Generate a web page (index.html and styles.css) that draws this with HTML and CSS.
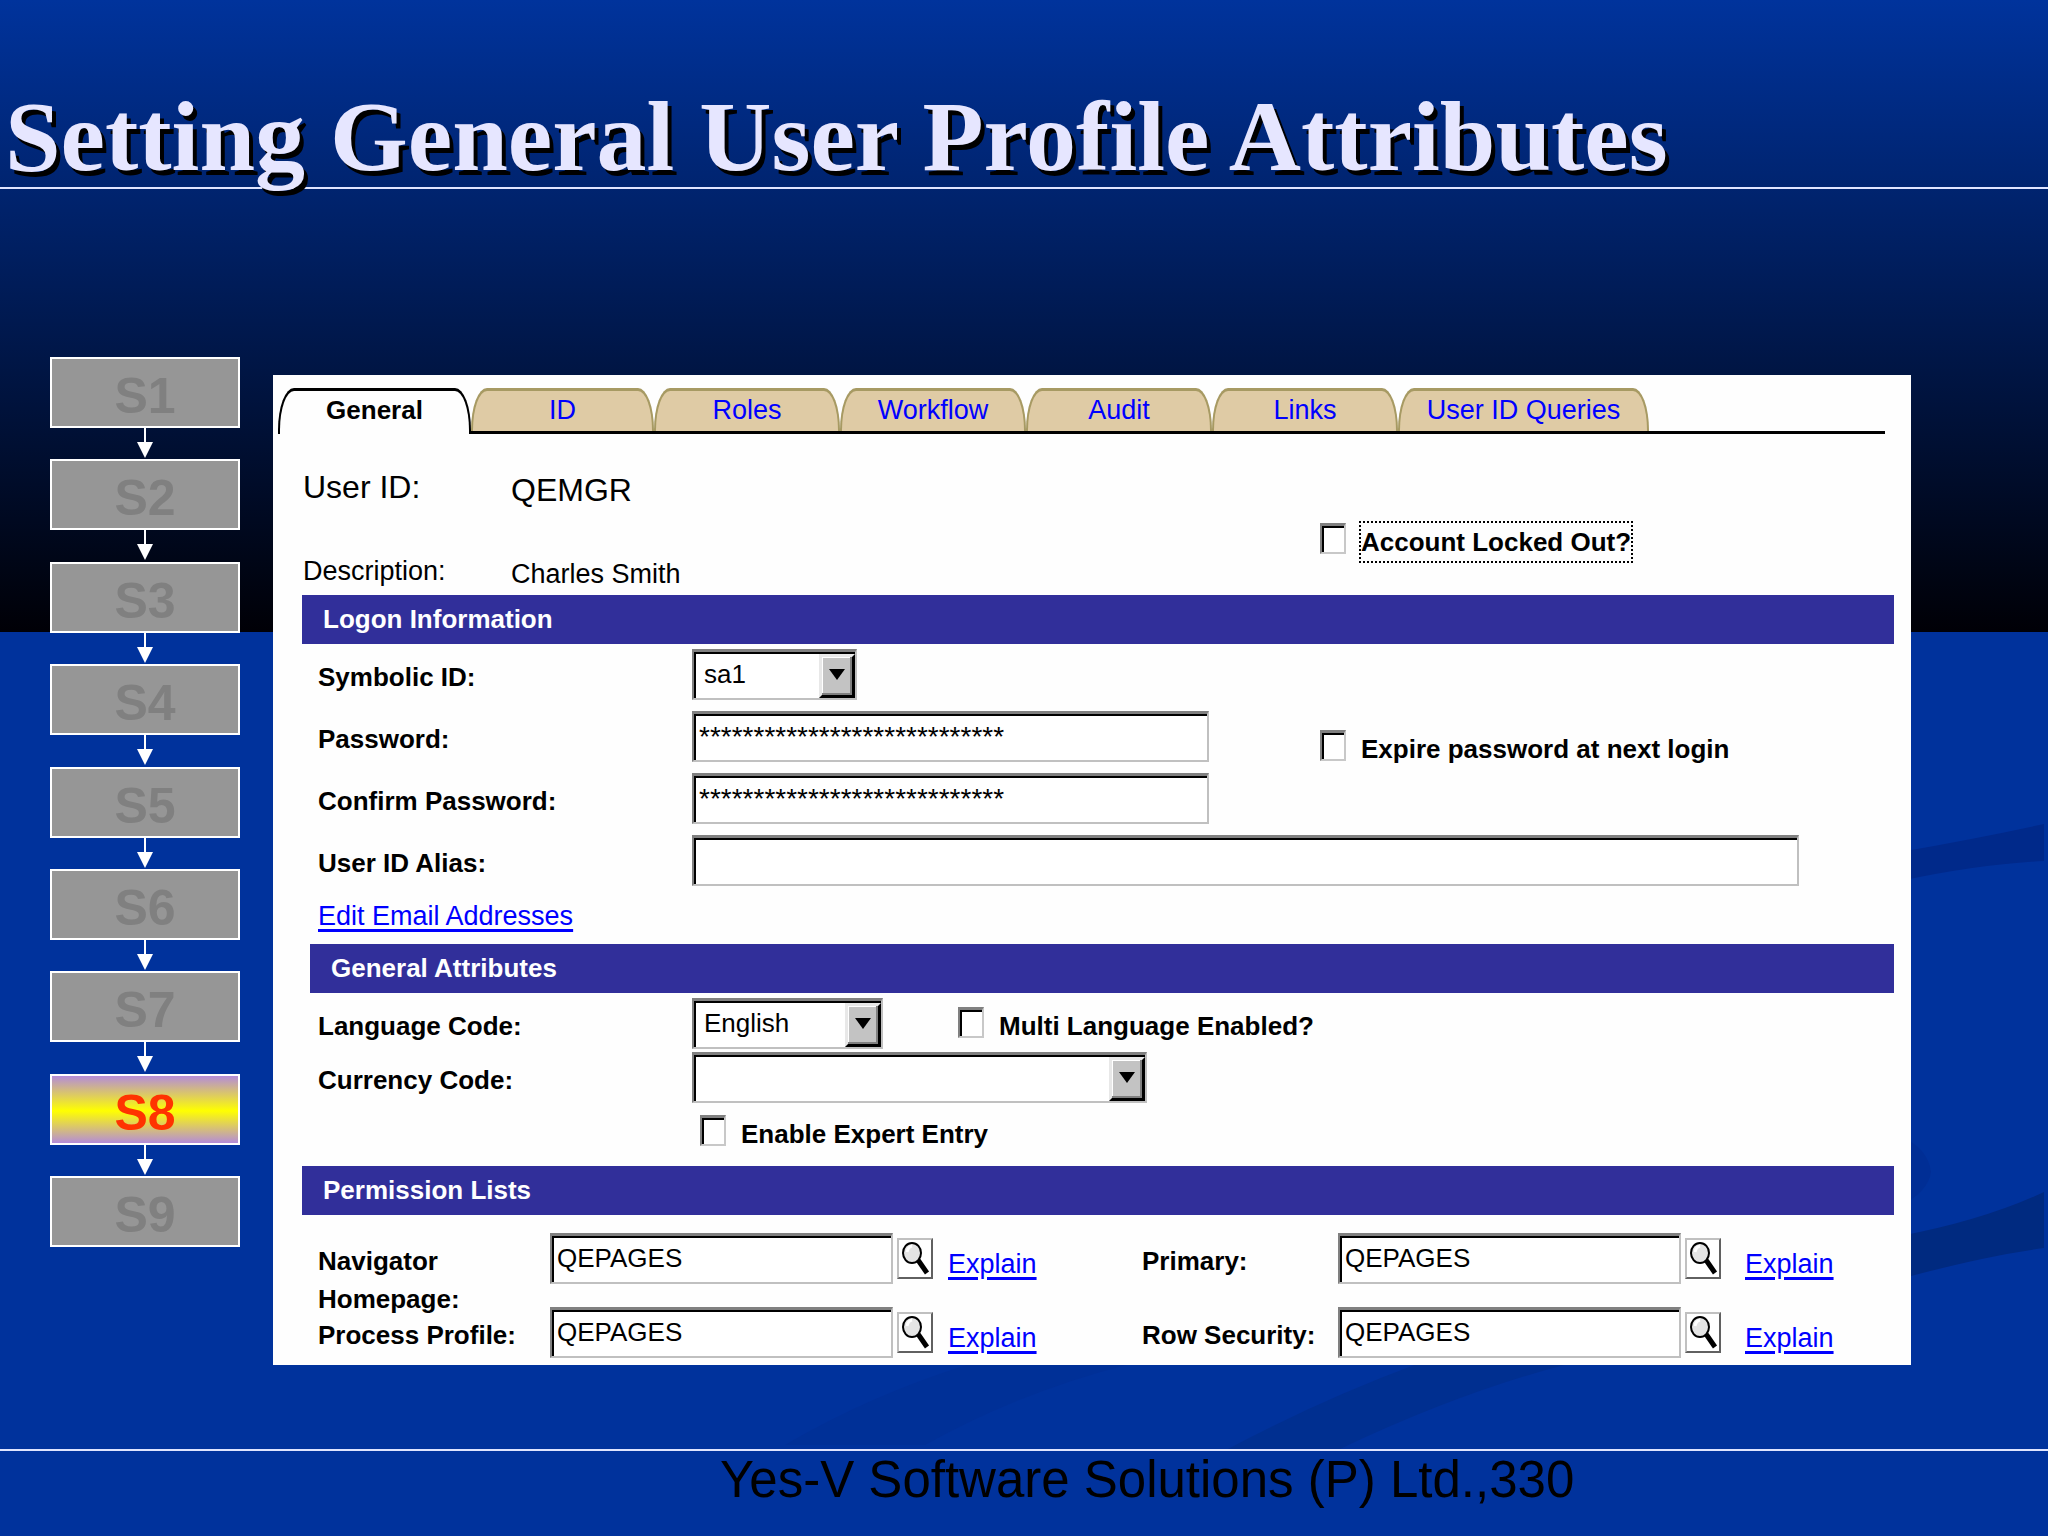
FILE: index.html
```html
<!DOCTYPE html>
<html lang="en">
<head>
<meta charset="utf-8">
<title>Setting General User Profile Attributes</title>
<link rel="stylesheet" href="styles.css">
</head>
<body>
<div class="slide">
  <svg class="swoosh" viewBox="0 0 2048 1536" preserveAspectRatio="none" aria-hidden="true">
    <path fill="#00298a" d="M1900 852Q1980 838 2044 824V861Q1980 864 1900 881Z"/>
    <path fill="#002e95" d="M1900 1136Q1928 1148 1931 1172Q1928 1192 1900 1206Z"/>
    <path fill="#002a80" d="M1900 1236Q1984 1220 2044 1192V1248Q1984 1256 1900 1279Z"/>
    <path fill="#002f90" d="M1228 1449Q1320 1400 1417 1364H1568Q1460 1392 1340 1449Z"/>
    <path fill="#003097" d="M785 1445Q870 1395 970 1364H1130Q1020 1392 925 1445Z"/>
  </svg>

  <header class="title-bar"><h1>Setting General User Profile Attributes</h1></header>

  <main class="content">
    <ol class="steps">
      <li>S1</li><li>S2</li><li>S3</li><li>S4</li><li>S5</li><li>S6</li><li>S7</li>
      <li class="current" aria-current="step">S8</li><li>S9</li>
    </ol>

    <form class="panel">
      <nav class="tabs">
        <a class="active" href="#general">General</a>
        <a class="slim" href="#id">ID</a>
        <a href="#roles">Roles</a>
        <a href="#workflow">Workflow</a>
        <a href="#audit">Audit</a>
        <a href="#links">Links</a>
        <a class="wide" href="#queries">User ID Queries</a>
      </nav>

      <div class="summary">
        <dl>
          <dt class="big">User ID:</dt><dd class="big">QEMGR</dd>
          <dt>Description:</dt><dd>Charles Smith</dd>
        </dl>
        <div class="check locked"><input type="checkbox" id="locked"><label class="focus" for="locked">Account Locked Out?</label></div>
      </div>

      <section>
        <h2>Logon Information</h2>
        <div class="rows logon">
          <div class="row"><label for="symbolic">Symbolic ID:</label>
            <span class="select w-s"><select id="symbolic"><option>sa1</option></select><span class="arrow"></span></span></div>
          <div class="row"><label for="pw">Password:</label>
            <input class="field masked" id="pw" value="****************************">
            <div class="check expire"><input type="checkbox" id="expire"><label for="expire">Expire password at next login</label></div></div>
          <div class="row"><label for="pw2">Confirm Password:</label>
            <input class="field masked" id="pw2" value="****************************"></div>
          <div class="row"><label for="alias">User ID Alias:</label>
            <input class="field long" id="alias"></div>
          <div><a href="#email">Edit Email Addresses</a></div>
        </div>
      </section>

      <section>
        <h2 class="inset">General Attributes</h2>
        <div class="rows general">
          <div class="row"><label for="lang">Language Code:</label>
            <span class="select w-m"><select id="lang"><option>English</option></select><span class="arrow"></span></span>
            <div class="check multi"><input type="checkbox" id="multi"><label for="multi">Multi Language Enabled?</label></div></div>
          <div class="row"><label for="currency">Currency Code:</label>
            <span class="select w-l"><select id="currency"><option></option></select><span class="arrow"></span></span></div>
          <div class="row"><div class="check expert"><input type="checkbox" id="expert"><label for="expert">Enable Expert Entry</label></div></div>
        </div>
      </section>

      <section>
        <h2>Permission Lists</h2>
        <div class="permissions">
          <label for="nav">Navigator<br>Homepage:</label>
          <input class="field" id="nav" value="QEPAGES">
          <button type="button" aria-label="Look up navigator homepage"><svg viewBox="0 0 32 37"><path d="M19 20L28 33" stroke="#000" stroke-width="5"/><ellipse cx="13" cy="13" rx="9" ry="10" fill="#e4e4e4" stroke="#000" stroke-width="2"/><path d="M8 12Q9 7 13 6" fill="none" stroke="#fff" stroke-width="3"/></svg></button>
          <a href="#explain-nav">Explain</a>
          <label for="primary">Primary:</label>
          <input class="field" id="primary" value="QEPAGES">
          <button type="button" aria-label="Look up primary"><svg viewBox="0 0 32 37"><path d="M19 20L28 33" stroke="#000" stroke-width="5"/><ellipse cx="13" cy="13" rx="9" ry="10" fill="#e4e4e4" stroke="#000" stroke-width="2"/><path d="M8 12Q9 7 13 6" fill="none" stroke="#fff" stroke-width="3"/></svg></button>
          <a href="#explain-primary">Explain</a>
          <label for="process">Process Profile:</label>
          <input class="field" id="process" value="QEPAGES">
          <button type="button" aria-label="Look up process profile"><svg viewBox="0 0 32 37"><path d="M19 20L28 33" stroke="#000" stroke-width="5"/><ellipse cx="13" cy="13" rx="9" ry="10" fill="#e4e4e4" stroke="#000" stroke-width="2"/><path d="M8 12Q9 7 13 6" fill="none" stroke="#fff" stroke-width="3"/></svg></button>
          <a href="#explain-process">Explain</a>
          <label for="row-sec">Row Security:</label>
          <input class="field" id="row-sec" value="QEPAGES">
          <button type="button" aria-label="Look up row security"><svg viewBox="0 0 32 37"><path d="M19 20L28 33" stroke="#000" stroke-width="5"/><ellipse cx="13" cy="13" rx="9" ry="10" fill="#e4e4e4" stroke="#000" stroke-width="2"/><path d="M8 12Q9 7 13 6" fill="none" stroke="#fff" stroke-width="3"/></svg></button>
          <a href="#explain-row">Explain</a>
        </div>
      </section>
    </form>
  </main>

  <footer><span>Yes-V Software Solutions (P) Ltd.,</span><span>330</span></footer>
</div>
</body>
</html>
```

FILE: styles.css
```css
* { box-sizing: border-box; }

body {
  margin: 0;
  background: #00329c;
  font-family: "Liberation Sans", Arial, sans-serif;
  font-size: 27px;
  line-height: 38px;
  color: #000;
}

.slide {
  position: relative;
  display: flex;
  flex-direction: column;
  min-height: 100vh;
  background: linear-gradient(#00339c, #000006 632px, #00329c 632px);
}

.swoosh { position: absolute; inset: 0; width: 100%; height: 100%; }

.title-bar, .content, footer { position: relative; }

.title-bar {
  height: 189px;
  padding: 84px 0 0 5px;
  border-bottom: 2px solid #dfe4ff;
}

h1 {
  margin: 0;
  font: bold 100px/106px "Liberation Serif", serif;
  color: #e6e6ff;
  text-shadow: 4px 5px 0 #000;
  white-space: nowrap;
}

.content {
  flex: 1;
  display: flex;
  align-items: flex-start;
  padding: 168px 137px 0 50px;
}

/* Step chain */
.steps {
  flex: none;
  display: flex;
  flex-direction: column;
  justify-content: space-between;
  min-height: 890px;
  width: 190px;
  margin: 0 33px 0 0;
  padding: 0;
  list-style: none;
}

.steps li {
  position: relative;
  height: 71px;
  border: 2px solid #fff;
  background: #969696;
  color: #808080;
  font: bold 50px/74px "Liberation Sans", Arial, sans-serif;
  text-align: center;
}

.steps .current {
  background: linear-gradient(#b48cd8, #ff0 52%, #b48cd8);
  color: #f30;
}

.steps li:not(:last-child)::before,
.steps li:not(:last-child)::after {
  content: "";
  position: absolute;
  left: 50%;
  top: 100%;
}

.steps li::before { width: 2px; height: 20px; margin-left: -1px; background: #fff; }

.steps li:not(:last-child)::after {
  margin: 16px 0 0 -8px;
  border: 8px solid transparent;
  border-top: 16px solid #fff;
  border-bottom: 0;
}

/* Form panel */
.panel {
  flex: 1;
  min-width: 0;
  margin-top: 18px;
  padding: 13px 17px 0 5px;
  background: #fefefe;
}

a { color: #00f; text-decoration-thickness: 3px; text-underline-offset: 4px; }

.tabs {
  display: flex;
  margin-right: 9px;
  border-bottom: 3px solid #000;
}

.tabs a {
  flex: 0 1 186px;
  height: 43px;
  border: 2px solid #a79a63;
  border-width: 3px 2px 0;
  border-radius: 16px 16px 0 0 / 42px 42px 0 0;
  background: #dfcba5;
  text-align: center;
  text-decoration: none;
  white-space: nowrap;
}

.tabs .slim { flex-basis: 183px; }
.tabs .wide { flex-basis: 251px; }

.tabs .active {
  flex-basis: 193px;
  height: 46px;
  margin-bottom: -3px;
  border-color: #000;
  background: #fefefe;
  color: #000;
  font-size: 26px;
  font-weight: bold;
}

.summary {
  display: flex;
  height: 161px;
  padding: 31px 0 0 25px;
}

.summary dl {
  display: grid;
  grid-template-columns: 208px 1fr;
  grid-template-rows: 87px 41px;
  width: 1017px;
  margin: 0;
}

.summary dd { margin: 0; padding-top: 3px; }
.big { font-size: 32px; line-height: 44px; }

h2 {
  margin: 0 0 0 24px;
  padding: 5px 21px 6px;
  background: #312f9a;
  color: #fff;
  font-size: 26px;
  line-height: 38px;
}

h2.inset { margin-left: 32px; }

.rows { display: grid; padding-left: 40px; }
.logon { gap: 12px; padding-top: 5px; padding-bottom: 9px; }
.general { gap: 4px; padding-top: 5px; padding-bottom: 10px; }

label { font-size: 26px; font-weight: bold; white-space: nowrap; }

.row { display: flex; height: 50px; }
.row > label { flex: none; width: 374px; }
.row label { padding-top: 9px; }

.field, select {
  height: 51px;
  margin: 0;
  padding: 0 5px 2px;
  border: 2px solid #c0c0c0;
  border-top: 3px solid #808080;
  border-left-color: #808080;
  border-radius: 0;
  background: #fff;
  box-shadow: inset 2px 2px 0 #000;
  color: #000;
  font: inherit;
  font-size: 26px;
}

.masked {
  width: 517px;
  padding-bottom: 0;
  font-size: 28px;
}

.long { width: 1107px; }

.select { position: relative; display: block; }
.select select { width: 100%; padding-left: 10px; appearance: none; }
.w-s { width: 165px; }
.w-m { width: 191px; }
.w-l { width: 455px; }

.arrow {
  position: absolute;
  top: 5px;
  right: 2px;
  width: 36px;
  height: 44px;
  border: 3px solid #000;
  border-top-color: #e8e8e8;
  border-left-color: #e8e8e8;
  background: #c3c3c3;
  box-shadow: inset -2px -2px 0 #808080, inset 1px 1px 0 #fff;
  pointer-events: none;
}

.arrow::after {
  content: "";
  position: absolute;
  left: 7px;
  top: 12px;
  border: 8px solid transparent;
  border-top: 11px solid #000;
  border-bottom: 0;
}

.check { display: flex; }

.check input {
  flex: none;
  width: 26px;
  height: 31px;
  margin: 0 15px 0 0;
  appearance: none;
  border: 2px solid #c8c8c8;
  border-top: 3px solid #808080;
  border-left-color: #808080;
  background: #fff;
  box-shadow: inset 2px 2px 0 #000;
}

.row .check input { margin-top: 9px; }
.locked { padding-top: 58px; }
.focus { align-self: flex-start; outline: 2px dotted #000; }
.expire { margin-left: 111px; padding-top: 10px; }
.multi { margin-left: 75px; }
.expert { margin-left: 382px; }

.permissions {
  display: grid;
  grid-template-columns: 232px 343px 55px 194px 196px 343px 64px 1fr;
  grid-template-rows: 74px 58px;
  align-items: start;
  padding: 18px 0 0 40px;
}

.permissions label { padding-top: 9px; }
.permissions .field { width: 100%; }
.permissions a { justify-self: start; margin-top: 12px; }

.permissions button {
  width: 36px;
  height: 41px;
  margin: 5px 0 0 4px;
  padding: 0;
  border: 2px solid #606060;
  border-top-color: #c0c0c0;
  border-left-color: #c0c0c0;
  background: #fff;
}

.permissions svg { display: block; width: 32px; height: 37px; }

footer {
  display: flex;
  height: 87px;
  padding-left: 720px;
  border-top: 2px solid #dfe4ff;
  font: 51px/58px "Liberation Sans", Arial, sans-serif;
  white-space: nowrap;
}
```
